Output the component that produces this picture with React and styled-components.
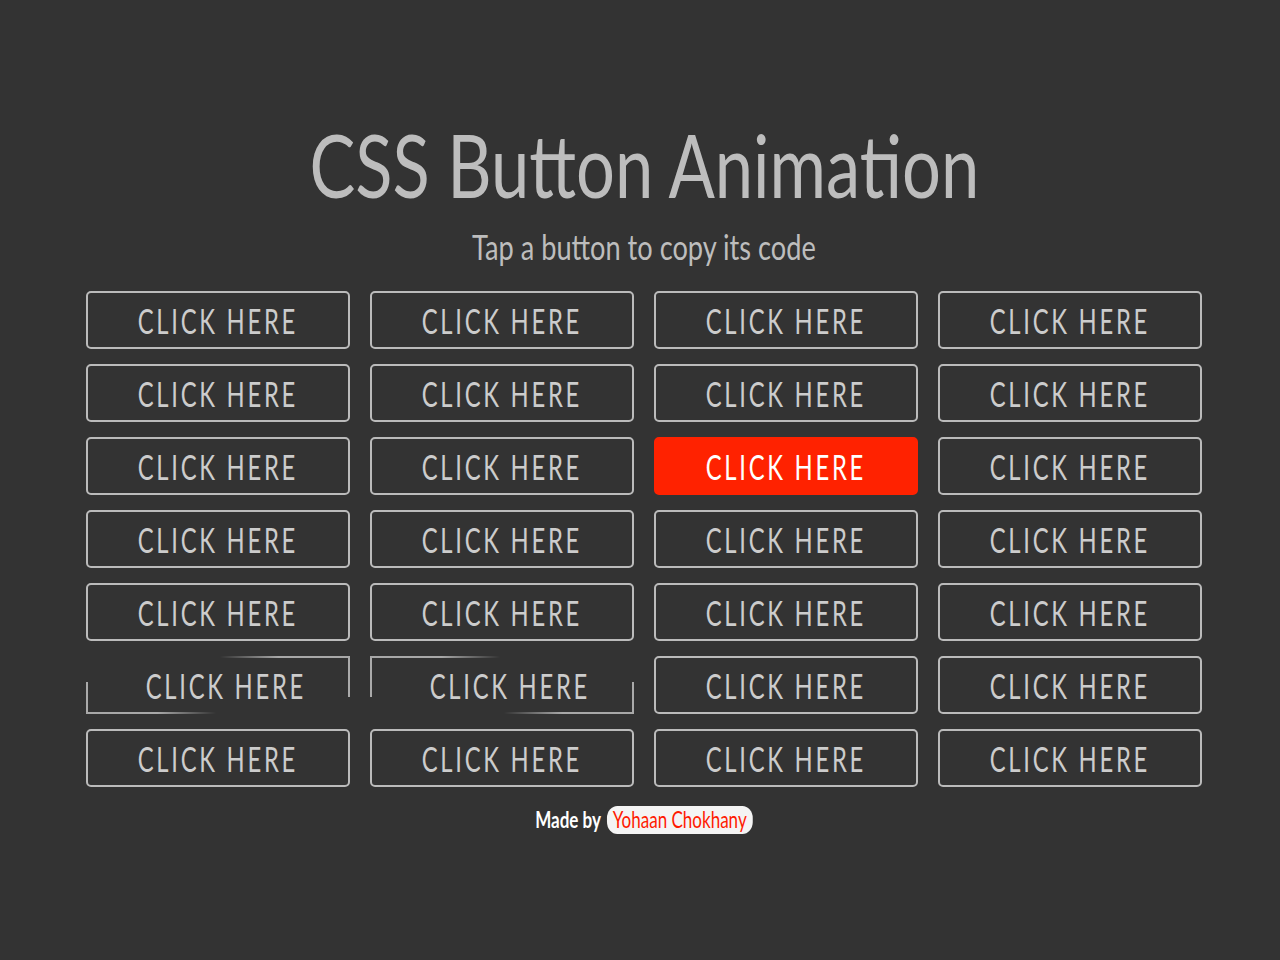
import React from "react";
import styled, { createGlobalStyle, css } from "styled-components";

const Global = createGlobalStyle`
  html, body {
    margin: 0;
    background: #333333;
  }
  body {
    font-family: Lato, "Open Sans", sans-serif;
  }
`;

const Page = styled.main`
  width: 1280px;
  height: 960px;
  display: flex;
  flex-direction: column;
  align-items: center;
  padding: 116px 0 0 8px;
  box-sizing: border-box;
`;

// the original face is a condensed one; squeeze the available font to match
const Narrow = styled.span`
  display: inline-block;
  white-space: nowrap;
  transform: scaleX(${(p) => p.$x || 0.75});
`;

const Title = styled.h1`
  margin: 0;
  font-size: 88px;
  line-height: 96px;
  font-weight: 400;
  color: #bdbdbd;
`;

const Subtitle = styled.p`
  margin: 13px 0 22px;
  font-size: 34px;
  line-height: 44px;
  color: #bdbdbd;
`;

const Grid = styled.div`
  display: grid;
  grid-template-columns: repeat(4, 264px);
  column-gap: 20px;
  row-gap: 15px;
`;

const Button = styled.button`
  position: relative;
  height: 58px;
  box-sizing: border-box;
  border: 2px solid #bbbbbb;
  border-radius: 5px;
  background: transparent;
  color: #cccccc;
  font-family: Lato, "Open Sans", sans-serif;
  font-weight: 400;
  font-size: 35px;
  letter-spacing: 4px;
  padding: 0;
  cursor: pointer;

  ${(p) =>
    p.$variant === "active" &&
    css`
      background: #ff2200;
      border-color: #ff2200;
      color: #ffffff;
    `}

  ${(p) =>
    (p.$variant === "cornerA" || p.$variant === "cornerB") &&
    css`
      border: none;
      border-radius: 0;
      padding-left: 16px;
      &::before,
      &::after {
        content: "";
        position: absolute;
        width: 2px;
        background: #aaaaaa;
      }
    `}

  ${(p) =>
    p.$variant === "cornerA" &&
    css`
      &::before { left: 0; bottom: 0; height: 32px; }
      &::after { right: 0; top: 0; height: 41px; }
    `}

  ${(p) =>
    p.$variant === "cornerB" &&
    css`
      &::before { left: 0; top: 0; height: 41px; }
      &::after { right: 0; bottom: 0; height: 32px; }
    `}
`;

const HLine = styled.span`
  position: absolute;
  height: 2px;
  width: 130px;
  ${(p) => (p.$top ? "top: 0;" : "bottom: 0;")}
  ${(p) => (p.$right ? "right: 0;" : "left: 0;")}
  background: linear-gradient(
    ${(p) => (p.$right ? "to left" : "to right")},
    #a8a8a8 55%,
    rgba(168, 168, 168, 0)
  );
`;

const Footer = styled.div`
  margin-top: 18px;
  font-size: 23px;
  font-weight: 700;
  color: #ffffff;
`;

const Author = styled.span`
  display: inline-block;
  margin-left: 8px;
  background: #f4f4f4;
  color: #ff1a00;
  font-weight: 400;
  border-radius: 14px / 12px;
  padding: 0 8px 1px;
  line-height: 27px;
`;

const variants = {
  "2-2": "active",
  "5-0": "cornerA",
  "5-1": "cornerB",
};

export default function App() {
  const rows = Array.from({ length: 7 });
  return (
    <>
      <Global />
      <Page>
        <Title>
          <Narrow $x={0.78}>CSS Button Animation</Narrow>
        </Title>
        <Subtitle>
          <Narrow $x={0.8}>Tap a button to copy its code</Narrow>
        </Subtitle>
        <Grid>
          {rows.map((_, r) =>
            [0, 1, 2, 3].map((c) => {
              const v = variants[`${r}-${c}`];
              return (
                <Button key={`${r}-${c}`} $variant={v}>
                  {v === "cornerA" && (
                    <>
                      <HLine />
                      <HLine $top $right />
                    </>
                  )}
                  {v === "cornerB" && (
                    <>
                      <HLine $top />
                      <HLine $right />
                    </>
                  )}
                  <Narrow $x={0.68}>CLICK HERE</Narrow>
                </Button>
              );
            })
          )}
        </Grid>
        <Footer>
          <Narrow $x={0.74}>
            Made by<Author>Yohaan Chokhany</Author>
          </Narrow>
        </Footer>
      </Page>
    </>
  );
}
